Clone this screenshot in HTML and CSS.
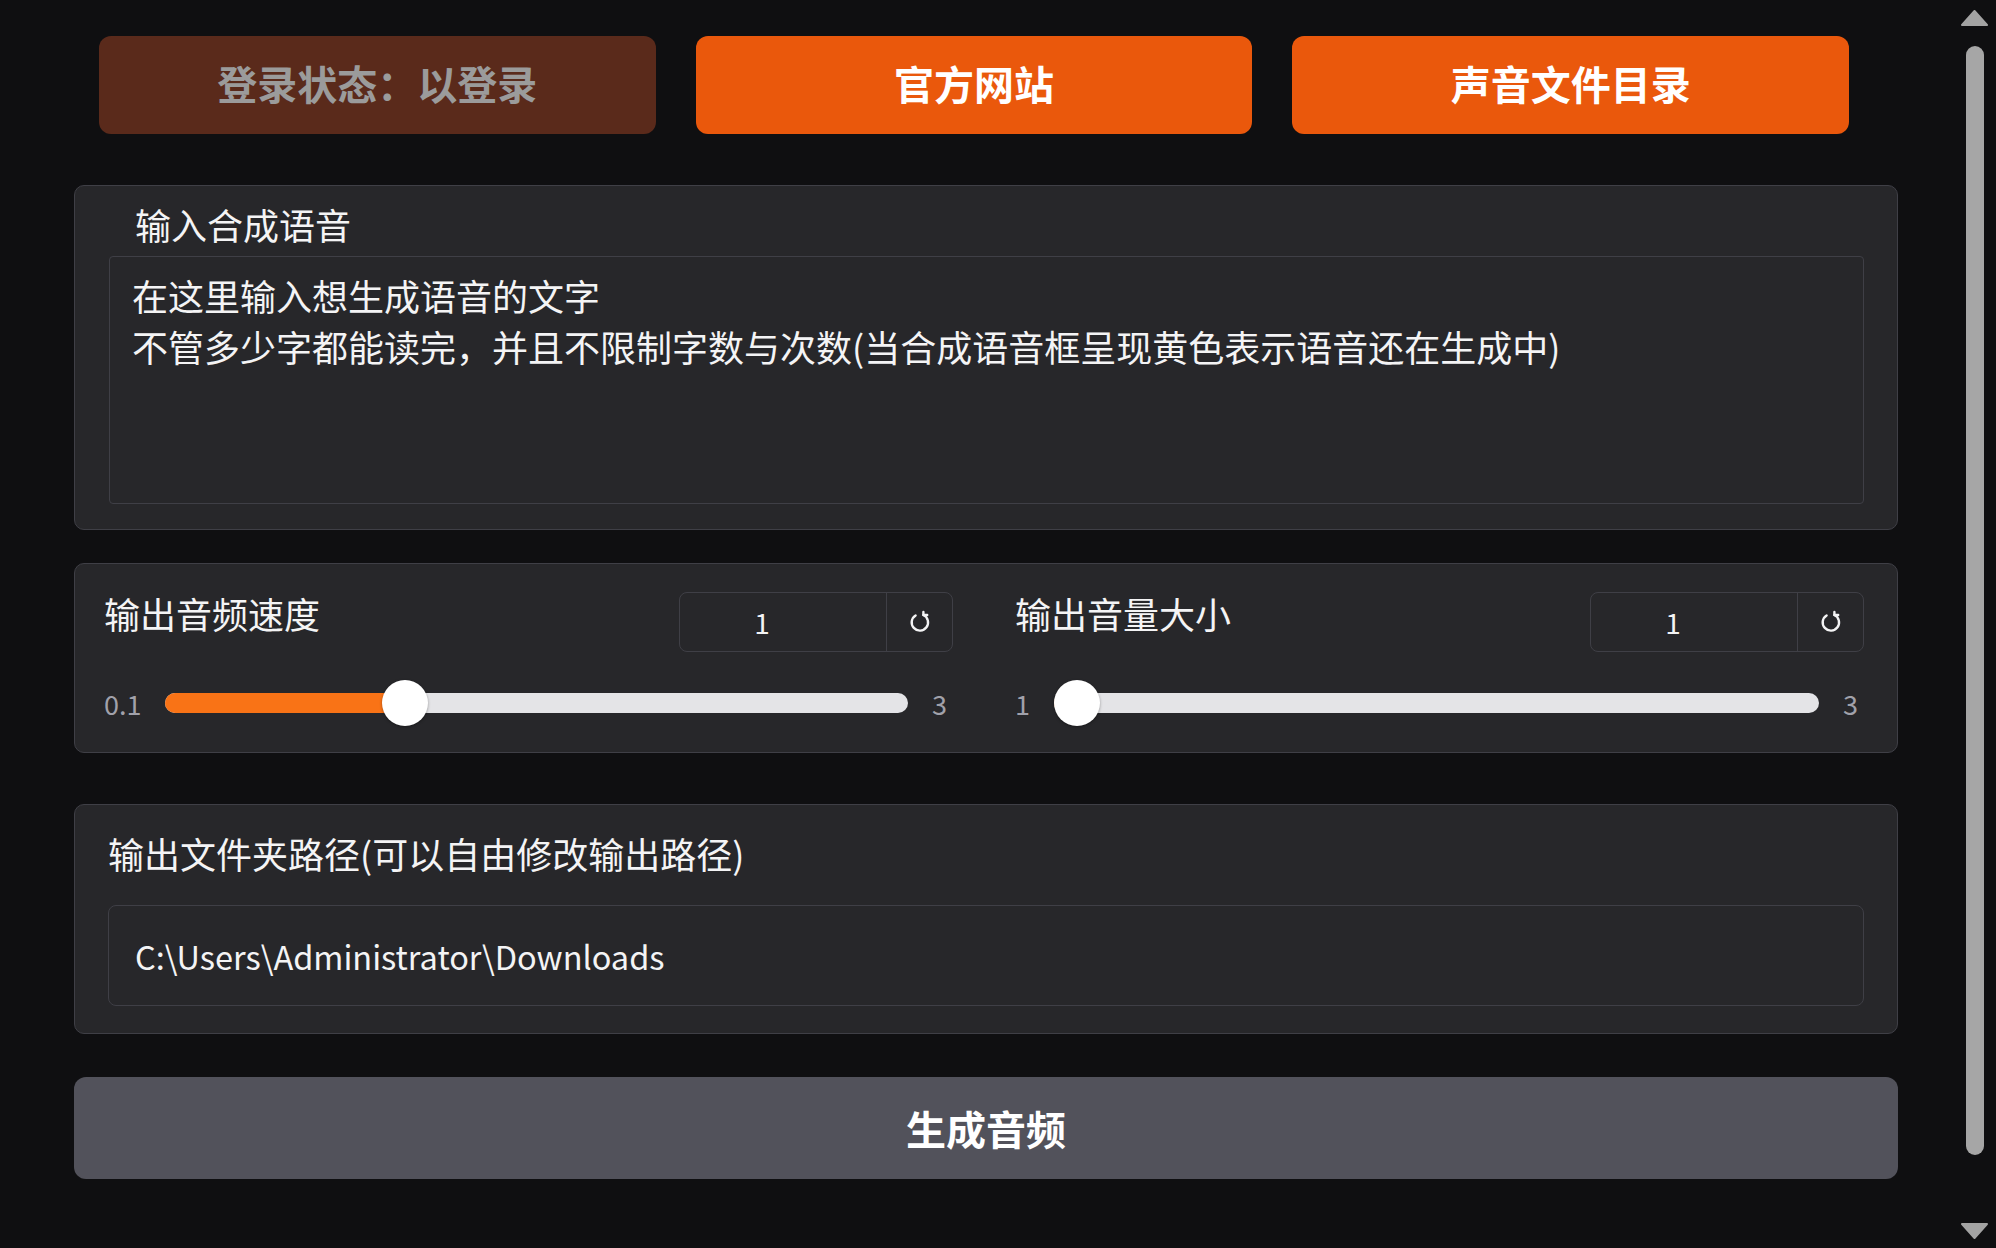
FILE: index.html
```html
<!DOCTYPE html>
<html>
<head>
  <meta charset="utf-8">
  <title>语音合成</title>
  <link rel="stylesheet" href="styles.css">
</head>
<body>
  <div class="app">
    <div class="top-row">
      <button class="btn btn-disabled" disabled>登录状态：以登录</button>
      <button class="btn btn-primary">官方网站</button>
      <button class="btn btn-primary">声音文件目录</button>
    </div>

    <div class="panel text-panel">
      <label class="panel-label indent" for="txt">输入合成语音</label>
      <textarea id="txt" class="txt">在这里输入想生成语音的文字
不管多少字都能读完，并且不限制字数与次数(当合成语音框呈现黄色表示语音还在生成中)</textarea>
    </div>

    <div class="panel slider-panel">
      <div class="slider-col">
        <div class="slider-head">
          <span class="panel-label">输出音频速度</span>
          <div class="num-box">
            <div class="num-value">1</div>
            <div class="num-reset">
              <svg width="24" height="24" viewBox="0 0 24 24" fill="none" stroke="#f4f4f5" stroke-width="2.4" stroke-linecap="round">
                <path d="M7.6 5.4 A8.2 8.2 0 1 0 15.4 5"/>
                <path d="M15.4 5 L15.4 2 M15.4 5 L19.2 5"/>
              </svg>
            </div>
          </div>
        </div>
        <div class="slider-row">
          <span class="range-label">0.1</span>
          <div class="track">
            <div class="rail">
              <div class="fill" style="width:31.03%"></div>
              <div class="thumb" style="left:31.03%"></div>
            </div>
          </div>
          <span class="range-label">3</span>
        </div>
      </div>

      <div class="slider-col">
        <div class="slider-head">
          <span class="panel-label">输出音量大小</span>
          <div class="num-box">
            <div class="num-value">1</div>
            <div class="num-reset">
              <svg width="24" height="24" viewBox="0 0 24 24" fill="none" stroke="#f4f4f5" stroke-width="2.4" stroke-linecap="round">
                <path d="M7.6 5.4 A8.2 8.2 0 1 0 15.4 5"/>
                <path d="M15.4 5 L15.4 2 M15.4 5 L19.2 5"/>
              </svg>
            </div>
          </div>
        </div>
        <div class="slider-row">
          <span class="range-label">1</span>
          <div class="track">
            <div class="rail">
              <div class="fill" style="width:0%"></div>
              <div class="thumb" style="left:0%"></div>
            </div>
          </div>
          <span class="range-label">3</span>
        </div>
      </div>
    </div>

    <div class="panel path-panel">
      <label class="panel-label" for="outdir">输出文件夹路径(可以自由修改输出路径)</label>
      <input id="outdir" class="path-input" type="text" value="C:\Users\Administrator\Downloads">
    </div>

    <button class="btn btn-generate">生成音频</button>
  </div>

  <div class="scrollbar">
    <svg class="arrow-up" width="27" height="16" viewBox="0 0 27 16"><polygon points="13.5,1 26,15 1,15" fill="#a3a3a3" stroke="#a3a3a3" stroke-width="2" stroke-linejoin="round"/></svg>
    <div class="scroll-thumb"></div>
    <svg class="arrow-down" width="27" height="16" viewBox="0 0 27 16"><polygon points="1,1 26,1 13.5,15" fill="#a3a3a3" stroke="#a3a3a3" stroke-width="2" stroke-linejoin="round"/></svg>
  </div>
</body>
</html>
```

FILE: styles.css
```css
html, body {
  margin: 0;
  height: 100%;
}

body {
  background: #0f0f11;
  color: #f4f4f5;
  font-family: "Noto Sans CJK SC", "Noto Sans", sans-serif;
  overflow: hidden;
}

.app {
  display: flex;
  flex-direction: column;
  padding: 36px 98px 0 74px;
}

.top-row {
  display: flex;
  gap: 40px;
  margin: 0 49px 0 25px;
}

.btn {
  font-family: inherit;
  font-size: 40px;
  font-weight: 700;
  border: none;
  border-radius: 12px;
  color: #ffffff;
  height: 98px;
  padding: 0;
  cursor: pointer;
}

.top-row .btn {
  flex: 1;
  padding-bottom: 5px;
}

.btn-primary {
  background: #ea580c;
}

.btn-disabled {
  background: #5a2a1b;
  color: #9b9b9b;
  cursor: default;
}

.btn-generate {
  margin-top: 43px;
  height: 102px;
  background: #52525b;
  color: #ffffff;
}

.panel {
  background: #27272a;
  border: 1px solid #3f3f46;
  border-radius: 10px;
  box-sizing: border-box;
}

.panel-label {
  display: block;
  font-size: 36px;
  line-height: 46px;
  color: #f4f4f5;
}

.text-panel {
  margin-top: 51px;
  padding: 15px 33px 25px 34px;
}

.panel-label.indent {
  padding-left: 26px;
}

.txt {
  display: block;
  box-sizing: border-box;
  width: 100%;
  height: 248px;
  margin-top: 9px;
  padding: 13px 22px;
  background: #27272a;
  border: 1px solid #3f3f46;
  border-radius: 4px;
  color: #f4f4f5;
  font-family: inherit;
  font-size: 36px;
  line-height: 51px;
  resize: none;
  outline: none;
}

.slider-panel {
  margin-top: 33px;
  padding: 28px 33px 26px 29px;
  display: grid;
  grid-template-columns: 1fr 1fr;
  column-gap: 62px;
}

.slider-head {
  display: flex;
  justify-content: space-between;
  align-items: flex-start;
}

.slider-head .panel-label {
  line-height: 42px;
}

.num-box {
  display: flex;
  width: 274px;
  height: 60px;
  box-sizing: border-box;
  border: 1px solid #3f3f46;
  border-radius: 8px;
}

.num-value {
  width: 206px;
  box-sizing: border-box;
  padding-right: 42px;
  text-align: center;
  font-size: 28px;
  line-height: 58px;
}

.num-reset {
  flex: 1;
  border-left: 1px solid #3f3f46;
  display: flex;
  align-items: center;
  justify-content: center;
}

.slider-row {
  display: flex;
  align-items: center;
  gap: 24px;
  height: 46px;
  margin-top: 28px;
  padding-right: 6px;
}

.range-label {
  font-size: 27px;
  color: #a1a1aa;
}

.track {
  flex: 1;
  position: relative;
  height: 20px;
  border-radius: 10px;
  background: #e4e4e7;
}

.rail {
  position: absolute;
  top: 0;
  bottom: 0;
  left: 23px;
  right: 23px;
}

.fill {
  position: absolute;
  left: -23px;
  top: 0;
  bottom: 0;
  padding-left: 23px;
  border-radius: 10px 0 0 10px;
  background: #f97316;
}

.thumb {
  position: absolute;
  top: 50%;
  width: 46px;
  height: 46px;
  margin: -23px 0 0 -23px;
  border-radius: 50%;
  background: #ffffff;
  box-shadow: 0 1px 3px rgba(0, 0, 0, 0.35);
}

.path-panel {
  margin-top: 51px;
  padding: 25px 33px 27px 33px;
}

.path-input {
  display: block;
  box-sizing: border-box;
  width: 100%;
  height: 101px;
  margin-top: 29px;
  padding: 0 26px;
  background: #27272a;
  border: 1px solid #3f3f46;
  border-radius: 8px;
  color: #f4f4f5;
  font-family: inherit;
  font-size: 32.5px;
  outline: none;
}

.scrollbar {
  position: fixed;
  top: 0;
  right: 8px;
  width: 27px;
  height: 100%;
  display: flex;
  flex-direction: column;
  align-items: center;
}

.arrow-up {
  margin-top: 10px;
}

.scroll-thumb {
  width: 18px;
  height: 1109px;
  margin-top: 20px;
  border-radius: 9px;
  background: #a6a6a6;
}

.arrow-down {
  margin-top: 68px;
}
```
